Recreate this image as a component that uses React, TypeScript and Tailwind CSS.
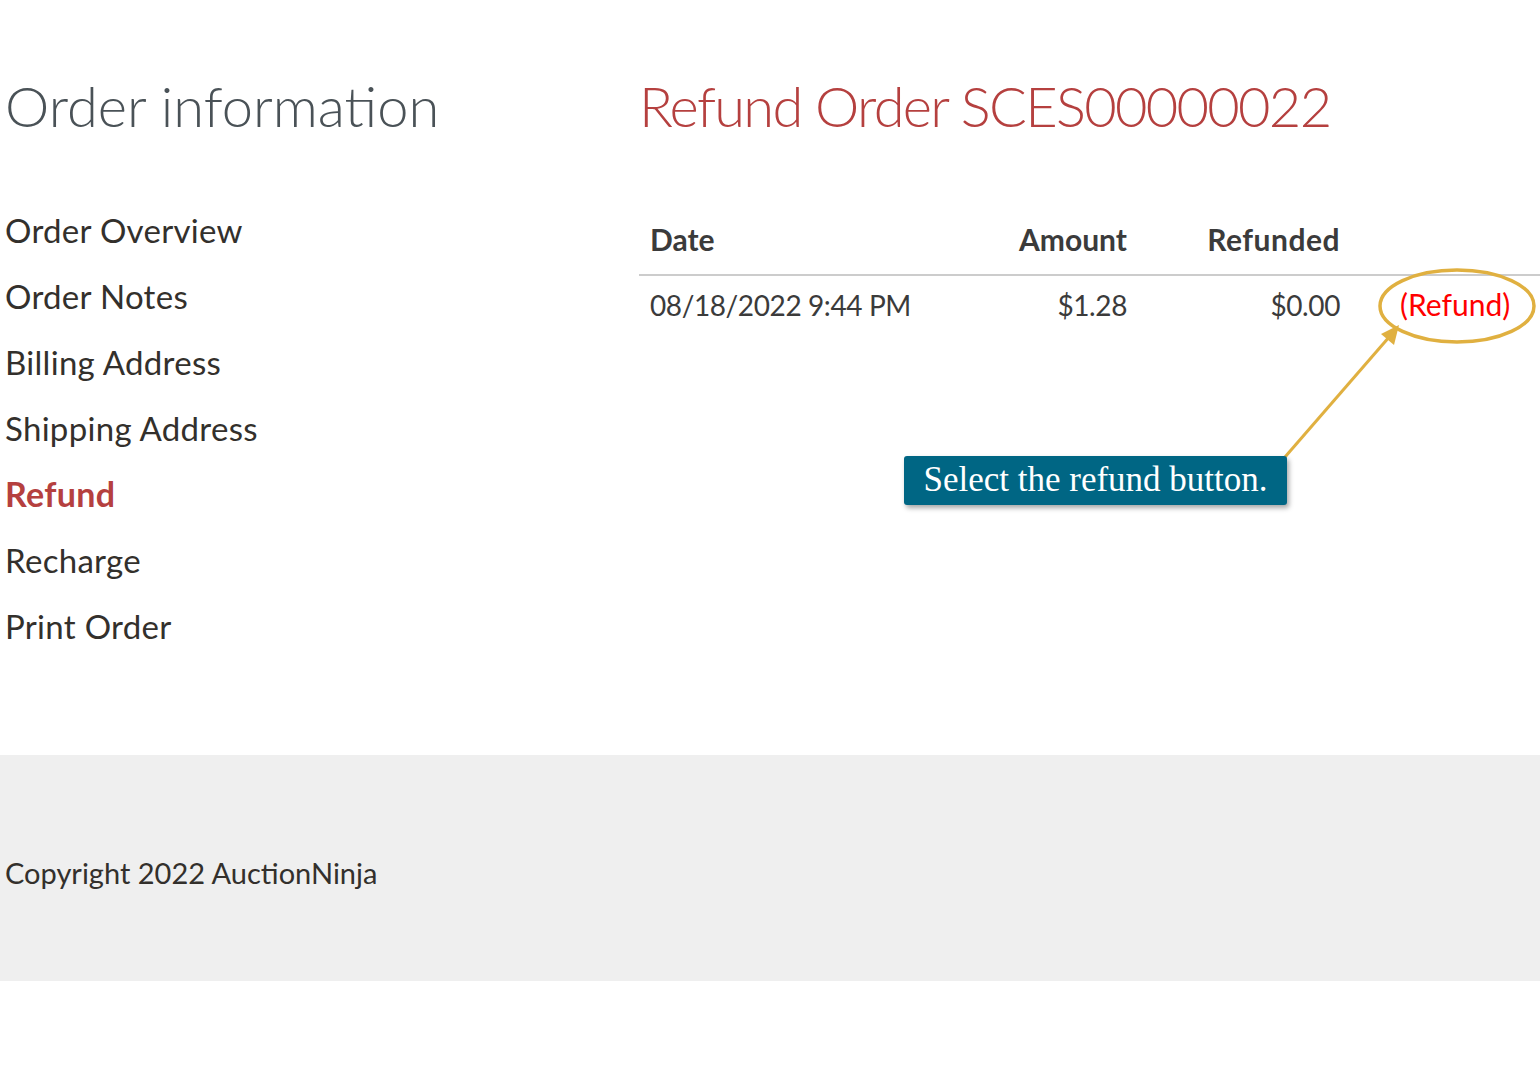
const navItems = [
  'Order Overview',
  'Order Notes',
  'Billing Address',
  'Shipping Address',
  'Refund',
  'Recharge',
  'Print Order',
];

export default function App() {
  return (
    <div className="min-h-[1090px] bg-white font-['Lato',sans-serif] text-[#33302c]">
      <div className="relative flex h-[755px]">
        <div className="w-[639px] shrink-0 pl-[5px] pt-[71px]">
          <h1 className="text-[56px] font-light leading-[70px] text-[#4a5257]">Order information</h1>
          <ul className="mt-[56px]">
            {navItems.map((item) => (
              <li
                key={item}
                className={
                  item === 'Refund'
                    ? 'h-[66px] text-[34px] font-bold leading-[66px] tracking-[0.3px] text-[#b5403f]'
                    : 'h-[66px] text-[33px] leading-[66px] tracking-[0.3px]'
                }
              >
                {item}
              </li>
            ))}
          </ul>
        </div>
        <div className="flex-1 pt-[71px]">
          <h2 className="text-[56px] font-light leading-[70px] tracking-[-1.7px] text-[#b5403f]">Refund Order SCES00000022</h2>
          <table className="mt-[76px] w-full border-collapse">
            <thead>
              <tr className="border-b-2 border-[#cccccc] text-[30px]">
                <th className="w-[378px] pb-[12px] pl-[11px] text-left font-bold text-[#3b3b3b]">Date</th>
                <th className="w-[110px] pb-[12px] text-right font-bold text-[#3b3b3b]">Amount</th>
                <th className="w-[213px] pb-[12px] pr-0 text-right font-bold tracking-[0.5px] text-[#3b3b3b]">Refunded</th>
                <th className="pb-[12px]"></th>
              </tr>
            </thead>
            <tbody>
              <tr className="text-[28px] tracking-[-0.4px]">
                <td className="pl-[11px] pt-[6px] text-left text-[#3b3b3b]">08/18/2022 9:44 PM</td>
                <td className="pt-[6px] text-right text-[#3b3b3b]">$1.28</td>
                <td className="pt-[6px] text-right text-[#3b3b3b]">$0.00</td>
                <td className="pl-[60px] pt-[6px] text-left text-[30px] tracking-normal text-[#ff0000]">(Refund)</td>
              </tr>
            </tbody>
          </table>
        </div>

        <svg className="pointer-events-none absolute left-0 top-0" width="1540" height="755">
          <ellipse cx="1457" cy="306" rx="77" ry="36" fill="none" stroke="#e0b040" strokeWidth="3.5" />
          <line x1="1285" y1="457" x2="1390" y2="336" stroke="#e0b040" strokeWidth="3" />
          <polygon points="1399,325 1394,345 1381,334" fill="#e0b040" />
        </svg>
        <div className="absolute left-[904px] top-[456px] flex h-[49px] w-[383px] items-center justify-center rounded-[3px] bg-[#006684] font-['Liberation_Serif',serif] text-[35px] text-white shadow-[2px_3px_5px_rgba(0,0,0,0.35)]">
          Select the refund button.
        </div>
      </div>
      <footer className="flex h-[226px] items-center bg-[#efefef] pl-[5px] pt-[10px] text-[29px] text-[#33302c]">
        Copyright 2022 AuctionNinja
      </footer>
    </div>
  );
}
